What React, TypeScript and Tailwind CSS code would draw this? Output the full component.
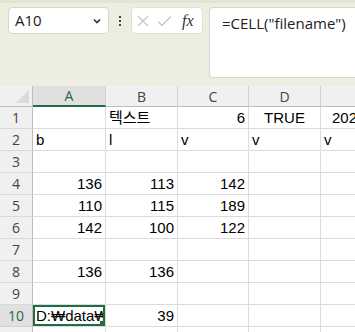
import React from 'react';

const cols = ['A', 'B', 'C', 'D', 'E'];

type Cell = { v: string; align?: 'left' | 'right' | 'center' };

const rows: Record<number, Record<string, Cell>> = {
  1: { B: { v: '텍스트' }, C: { v: '6', align: 'right' }, D: { v: 'TRUE', align: 'center' }, E: { v: '2024-01-01' } },
  2: { A: { v: 'b' }, B: { v: 'l' }, C: { v: 'v' }, D: { v: 'v' }, E: { v: 'v' } },
  4: { A: { v: '136', align: 'right' }, B: { v: '113', align: 'right' }, C: { v: '142', align: 'right' } },
  5: { A: { v: '110', align: 'right' }, B: { v: '115', align: 'right' }, C: { v: '189', align: 'right' } },
  6: { A: { v: '142', align: 'right' }, B: { v: '100', align: 'right' }, C: { v: '122', align: 'right' } },
  8: { A: { v: '136', align: 'right' }, B: { v: '136', align: 'right' } },
  10: { A: { v: 'D:₩data₩data.xlsx' }, B: { v: '39', align: 'right' } },
};

const cellFont = { fontFamily: '"Liberation Sans", "Noto Sans CJK KR", Arial, sans-serif' };
const uiFont = { fontFamily: '"Open Sans", "Noto Sans", sans-serif' };

function FormulaBar() {
  return (
    <div className="h-[86px] bg-[#eeeee0] border-t-[3px] border-[#e3e3d6]">
      <div className="flex items-start pt-[4px]">
        {/* 이름 상자 */}
        <div className="ml-[8px] w-[101px] h-[27px] bg-white border border-[#d6d6d0] rounded-[4px] flex items-center justify-between pl-[6px] pr-[6px]">
          <span className="text-[15px] text-[#222]" style={uiFont}>A10</span>
          <svg width="10" height="10" viewBox="0 0 10 10">
            <path d="M2 3.5 L5 6.5 L8 3.5" fill="none" stroke="#333" strokeWidth="1.6" />
          </svg>
        </div>
        {/* 점 세 개 */}
        <div className="w-[22px] h-[27px] flex flex-col items-center justify-center gap-[2px]">
          <span className="w-[2px] h-[2px] bg-[#444]" />
          <span className="w-[2px] h-[2px] bg-[#444]" />
          <span className="w-[2px] h-[2px] bg-[#444]" />
        </div>
        {/* 취소 / 입력 / fx */}
        <div className="w-[72px] h-[27px] bg-white border border-[#e0e0da] rounded-[4px] flex items-center pl-[5px] gap-[8px]">
          <svg width="12" height="12" viewBox="0 0 12 12">
            <path d="M1 1 L11 11 M11 1 L1 11" stroke="#c4c4c4" strokeWidth="1.2" />
          </svg>
          <svg width="15" height="12" viewBox="0 0 15 12">
            <path d="M1 6.5 L5 10.5 L14 1.5" fill="none" stroke="#c4c4c4" strokeWidth="1.2" />
          </svg>
          <span className="text-[16px] italic text-[#333] leading-none ml-[2px]" style={{ fontFamily: '"Liberation Serif", "DejaVu Serif", serif' }}>fx</span>
        </div>
        {/* 수식 입력줄 */}
        <div className="ml-[6px] flex-1 h-[71px] bg-white border border-r-0 border-[#d6d6d0] rounded-l-[4px] pl-[12px] pt-[3px]">
          <span className="text-[15px] text-[#222]" style={uiFont}>=CELL("filename")</span>
        </div>
      </div>
    </div>
  );
}

function Grid() {
  const rowNums = Array.from({ length: 11 }, (_, i) => i + 1);
  return (
    <div className="w-max grid grid-cols-[33px_73px_72px_71px_72px_84px] grid-rows-[21px_repeat(11,22px)] bg-white">
      {/* 모서리 */}
      <div className="bg-[#f0f0f0] border-r border-b border-[#bdbdbd] relative">
        <svg className="absolute right-[3px] bottom-[3px]" width="13" height="13" viewBox="0 0 13 13">
          <path d="M13 0 L13 13 L0 13 Z" fill="#dadada" />
        </svg>
      </div>
      {cols.map((c) => (
        <div
          key={c}
          className={
            c === 'A'
              ? 'bg-[#e0e0e0] border-r border-[#d0d0d0] border-b-2 border-b-[#1e6e42] flex items-center justify-center text-[14px] text-[#1e6e42]'
              : 'bg-[#f0f0f0] border-r border-b border-[#d0d0d0] border-b-[#bdbdbd] flex items-center justify-center text-[14px] text-[#444]'
          }
          style={uiFont}
        >
          {c}
        </div>
      ))}
      {rowNums.map((r) => (
        <React.Fragment key={r}>
          <div
            className={
              r === 10
                ? 'bg-[#e0e0e0] border-r border-r-[#bdbdbd] border-b border-[#d0d0d0] flex items-center justify-center text-[14px] text-[#1e6e42]'
                : 'bg-[#f0f0f0] border-r border-r-[#bdbdbd] border-b border-[#d8d8d8] flex items-center justify-center text-[14px] text-[#444]'
            }
            style={uiFont}
          >
            {r}
          </div>
          {cols.map((c) => {
            const cell = rows[r]?.[c];
            const active = r === 10 && c === 'A';
            const align =
              cell?.align === 'right' ? 'justify-end' : cell?.align === 'center' ? 'justify-center' : 'justify-start';
            return (
              <div
                key={c}
                className={`relative border-r border-b border-[#dcdcdc] flex items-end pb-[1px] px-[3px] overflow-hidden ${align}`}
              >
                {cell && (
                  <span
                    className={`text-[15px] text-black whitespace-nowrap leading-[19px] ${c === 'E' && r === 1 ? 'ml-[8px]' : ''}`}
                    style={cellFont}
                  >
                    {cell.v}
                  </span>
                )}
                {active && (
                  <div className="absolute left-0 top-0 right-0 bottom-0 border-2 border-[#1e6e42] pointer-events-none" />
                )}
                {active && (
                  <div className="absolute right-0 bottom-0 w-[5px] h-[5px] bg-[#1e6e42]" />
                )}
              </div>
            );
          })}
        </React.Fragment>
      ))}
    </div>
  );
}

export default function App() {
  return (
    <div className="w-[355px] h-[332px] overflow-hidden bg-white">
      <FormulaBar />
      <Grid />
    </div>
  );
}
